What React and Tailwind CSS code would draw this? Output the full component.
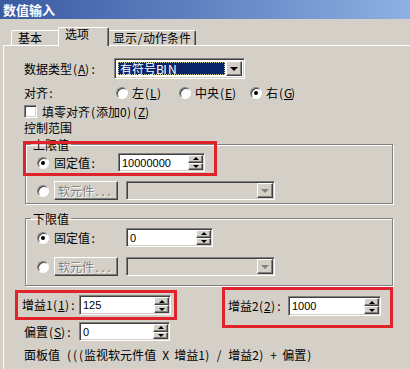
import React from "react";

const SUNKEN =
  "border border-t-[#808080] border-l-[#808080] border-r-white border-b-white shadow-[inset_1px_1px_0_#404040,inset_-1px_-1px_0_#d4d0c8]";
const RAISED =
  "border border-t-white border-l-white border-r-[#404040] border-b-[#404040] shadow-[inset_-1px_-1px_0_#808080]";

const isWide = (c) => /[\u2e80-\uffff]/.test(c);

// Renders text with SimSun-like metrics: CJK 12px, half-width 6px cells. "_X" underlines X.
function T({ s }) {
  const chars = Array.from(s);
  const out = [];
  for (let i = 0; i < chars.length; i++) {
    let c = chars[i];
    let u = false;
    if (c === "_" && i + 1 < chars.length) {
      u = true;
      i++;
      c = chars[i];
    }
    if (isWide(c)) {
      out.push(c);
    } else {
      out.push(
        <span
          key={i}
          className={`inline-block w-[6px] text-center ${u ? "underline underline-offset-[1px]" : ""}`}
        >
          {c === " " ? "\u00a0" : c}
        </span>
      );
    }
  }
  return <>{out}</>;
}

function Radio({ on }) {
  return (
    <span className="w-[12px] h-[12px] shrink-0 rounded-full bg-white border border-t-[#808080] border-l-[#808080] border-r-white border-b-white shadow-[inset_1px_1px_0_#404040] flex items-center justify-center">
      {on && <span className="w-[4px] h-[4px] rounded-full bg-black" />}
    </span>
  );
}

function SpinBtn({ up }) {
  return (
    <div className={`flex-1 bg-[#d4d0c8] ${RAISED} flex items-center justify-center`}>
      {up ? (
        <span className="w-0 h-0 border-x-[3px] border-x-transparent border-b-[3px] border-b-black" />
      ) : (
        <span className="w-0 h-0 border-x-[3px] border-x-transparent border-t-[3px] border-t-black" />
      )}
    </div>
  );
}

function Spin({ className, value }) {
  return (
    <div className={`flex bg-white p-[1px] ${SUNKEN} ${className}`}>
      <div className="flex-1 flex items-center pl-[2px] text-[11px] font-['Liberation_Sans',sans-serif]">
        {value}
      </div>
      <div className="w-[15px] flex flex-col">
        <SpinBtn up />
        <SpinBtn />
      </div>
    </div>
  );
}

function DropBtn({ disabled }) {
  return (
    <div className={`w-[16px] h-full bg-[#d4d0c8] ${RAISED} flex items-center justify-center`}>
      <span
        className={`w-0 h-0 border-x-[4px] border-x-transparent border-t-[4px] ${
          disabled ? "border-t-[#808080]" : "border-t-black"
        }`}
      />
    </div>
  );
}

function DisabledRow() {
  return (
    <div className="flex items-center h-[19px]">
      <Radio />
      <div
        className={`ml-[5px] w-[64px] h-[19px] bg-[#d4d0c8] ${RAISED} flex items-center pl-[3px] text-[#808080] [text-shadow:1px_1px_0_#fff]`}
      >
        <T s="软元件..." />
      </div>
      <div className={`ml-[8px] w-[149px] h-[19px] bg-[#d4d0c8] p-[1px] flex justify-end ${SUNKEN}`}>
        <DropBtn disabled />
      </div>
    </div>
  );
}

const GROUP =
  "w-[368px] border border-[#808080] shadow-[1px_1px_0_#fff,inset_1px_1px_0_#fff]";

export default function App() {
  return (
    <div className="w-[410px] h-[369px] overflow-hidden bg-[#d4d0c8] text-black text-[12px] leading-[12px] font-['Noto_Sans_CJK_SC','Noto_Sans',sans-serif]">
      {/* title bar */}
      <div className="h-[19px] bg-gradient-to-r from-[#3a5aa2] via-[#6283c2] to-[#8fb0e2] flex items-center pl-[3px] text-white font-bold text-[13px] leading-[13px]">
        数值输入
      </div>

      {/* tabs */}
      <div className="h-[26px] flex items-end pl-[11px]">
        <div className="w-[47px] h-[15px] border-t border-l border-white rounded-tl-[2px] pl-[6px] pt-[1px]">
          基本
        </div>
        <div className="relative z-10 w-[51px] h-[19px] -mb-[1px] bg-[#d4d0c8] border-t border-l border-white border-r border-r-[#404040] rounded-t-[2px] pl-[6px] pt-0 shadow-[inset_-1px_0_0_#808080]">
          选项
        </div>
        <div className="w-[87px] h-[15px] border-t border-white border-r border-r-[#404040] rounded-tr-[2px] pl-[4px] pt-[1px] shadow-[inset_-1px_0_0_#808080]">
          <T s="显示/动作条件" />
        </div>
      </div>

      {/* panel */}
      <div className="ml-[3px] border-t border-l border-white h-[400px] pl-[20px]">
        {/* data type */}
        <div className="mt-[12px] h-[21px] flex items-center">
          <div className="w-[90px]">
            <T s="数据类型(_A):" />
          </div>
          <div className={`w-[131px] h-[21px] bg-white p-[2px] flex ${SUNKEN}`}>
            <div className="flex-1 m-[1px] bg-[#0a246a] text-white border border-dotted border-[#d8d890] flex items-center pl-[1px]">
              <T s="有符号BIN" />
            </div>
            <DropBtn />
          </div>
        </div>

        {/* align */}
        <div className="mt-[7px] h-[14px] flex items-center">
          <div className="w-[92px]">
            <T s="对齐:" />
          </div>
          <div className="w-[63px] flex items-center gap-[4px]">
            <Radio />
            <span>
              <T s="左(_L)" />
            </span>
          </div>
          <div className="w-[71px] flex items-center gap-[4px]">
            <Radio />
            <span>
              <T s="中央(_E)" />
            </span>
          </div>
          <div className="flex items-center gap-[4px]">
            <Radio on />
            <span>
              <T s="右(_G)" />
            </span>
          </div>
        </div>

        {/* zero fill */}
        <div className="mt-[5px] h-[13px] flex items-center gap-[5px]">
          <span className={`w-[13px] h-[13px] bg-white ${SUNKEN}`} />
          <span>
            <T s="填零对齐(添加0)(_Z)" />
          </span>
        </div>

        <div className="mt-[4px] h-[12px]">控制范围</div>

        {/* upper limit */}
        <div className="relative mt-[4px] ml-[1px] w-[368px]">
          <fieldset className={`${GROUP} pb-[3px]`}>
            <legend className="ml-[5px] px-[2px] h-[13px] leading-[13px]">上限值</legend>
            <div className="pl-[11px]">
              <div className="mt-[2px] h-[19px] flex items-center">
                <Radio on />
                <span className="ml-[5px] w-[64px]">
                  <T s="固定值:" />
                </span>
                <Spin className="w-[87px] h-[19px]" value="10000000" />
              </div>
              <div className="mt-[9px]">
                <DisabledRow />
              </div>
            </div>
          </fieldset>
          <div className="absolute left-[-2px] top-[3px] w-[194px] h-[35px] border-[3px] border-[#e0222a] pointer-events-none" />
        </div>

        {/* lower limit */}
        <fieldset className={`${GROUP} mt-[8px] ml-[1px] pb-[9px]`}>
          <legend className="ml-[5px] px-[2px] h-[13px] leading-[13px]">下限值</legend>
          <div className="pl-[11px]">
            <div className="mt-[3px] h-[19px] flex items-center">
              <Radio on />
              <span className="ml-[5px] w-[72px]">
                <T s="固定值:" />
              </span>
              <Spin className="w-[87px] h-[19px]" value="0" />
            </div>
            <div className="mt-[10px]">
              <DisabledRow />
            </div>
          </div>
        </fieldset>

        {/* gains */}
        <div className="mt-[1px] flex items-start -ml-[9px]">
          <div className="w-[162px] pt-[3px]">
            <div className="h-[30px] border-[3px] border-[#e0222a] flex items-center pl-[4px]">
              <span className="w-[57px]">
                <T s="增益1(_1):" />
              </span>
              <Spin className="w-[92px] h-[20px]" value="125" />
            </div>
            <div className="mt-[2px] h-[19px] pl-[9px] flex items-center">
              <span className="w-[55px]">
                <T s="偏置(_S):" />
              </span>
              <Spin className="w-[91px] h-[19px]" value="0" />
            </div>
          </div>
          <div className="ml-[45px] w-[171px] h-[41px] border-[3px] border-[#e0222a] pl-[3px] pt-[6px]">
            <div className="flex items-center h-[20px]">
              <span className="w-[60px]">
                <T s="增益2(_2):" />
              </span>
              <Spin className="w-[93px] h-[20px]" value="1000" />
            </div>
          </div>
        </div>

        <div className="mt-[8px] h-[12px] whitespace-nowrap">
          <T s="面板值 (((监视软元件值 X 增益1) / 增益2) + 偏置)" />
        </div>
      </div>
    </div>
  );
}
